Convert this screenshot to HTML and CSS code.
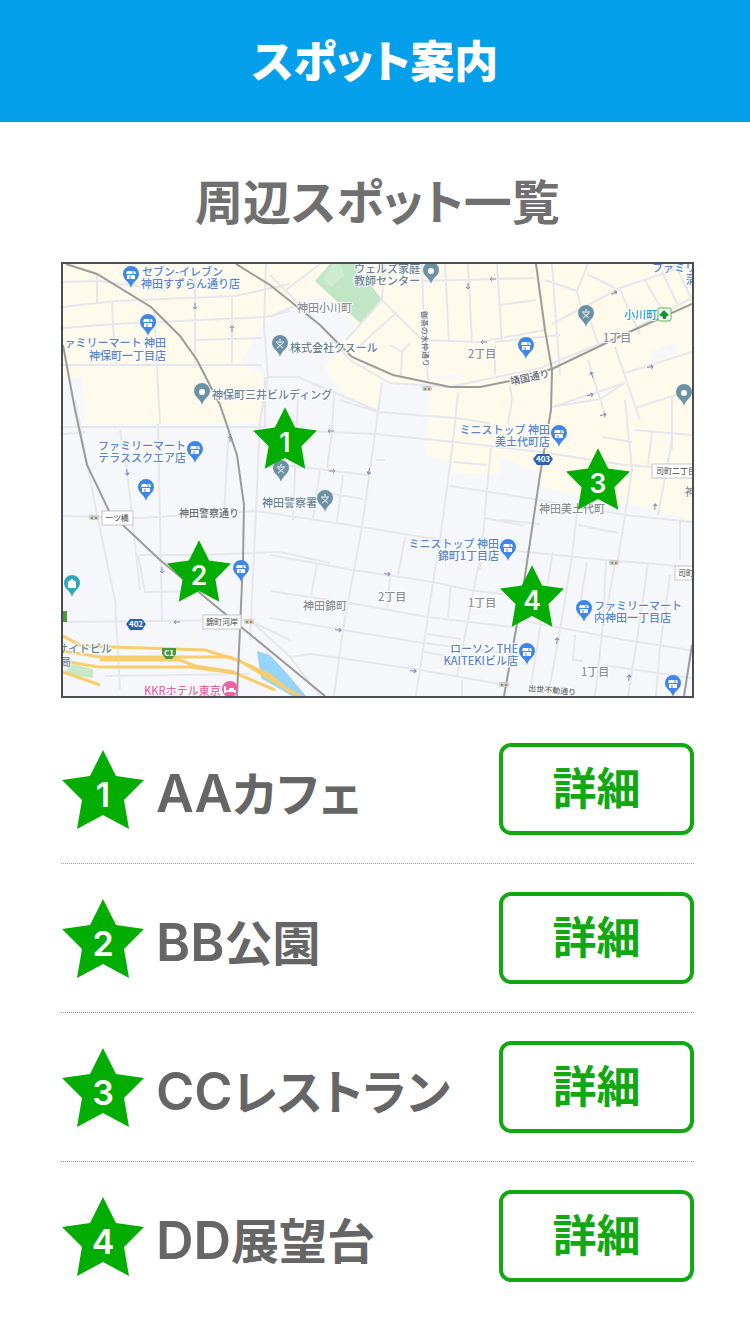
FILE: index.html
```html
<!DOCTYPE html>
<html lang="ja">
<head>
    <meta charset="UTF-8">
    <meta name="viewport" content="width=device-width, initial-scale=1.0">
    <title>スポット案内</title>
    <link rel="stylesheet" href="styles.css">
</head>
<body>
    <header class="header">
        <h1>スポット案内</h1>
    </header>
    <main class="container">
        <h2>周辺スポット一覧</h2>
        <svg class="map" viewBox="63 264 629 432" role="img" aria-label="周辺地図">
            <defs>
                <path id="star" d="M41 0 L54 26 L82 30 L62 50 L67 79 L41 65 L15 79 L20 50 L0 30 L28 26Z"/>
                <path id="pin" d="M0 13 C-1 7 -8 5 -8 -1 A8 8 0 0 1 8 -1 C8 5 1 7 0 13Z"/>
                <g id="shop">
                    <use href="#pin" fill="#3f86ea"/>
                    <path d="M-4 -4 H4 L5 -1 H-5Z M-4 0 H4 V4 H-4Z" fill="#fff"/>
                    <path d="M-1 1 V4 M2 -4 V0" stroke="#3f86ea"/>
                </g>
                <g id="place">
                    <use href="#pin" fill="#6d92a6"/>
                    <circle r="3" fill="#fff"/>
                </g>
                <g id="school">
                    <use href="#pin" fill="#6d92a6"/>
                    <path d="M0 -5 V-3 M-4 -2 H4 M-3 -1 L3 4 M3 -1 L-3 4" stroke="#fff" stroke-width="1" fill="none"/>
                </g>
                <path id="arrow" d="M-3 0 H3 M1 -2 L3 0 L1 2" fill="none" stroke="#8587b0" stroke-width="1"/>
                <g id="signal">
                    <rect x="-5" y="-3" width="10" height="5" rx="2" fill="#c9cbc4"/>
                    <circle cx="-2" r="1" fill="#34a853"/><circle cx="2" r="1" fill="#e5503f"/>
                </g>
            </defs>

            <!-- 区域 -->
            <rect x="63" y="264" width="629" height="432" fill="#f6f7fb"/>
            <g fill="#fffaec">
                <path d="M63 264 H692 V520 L640 506 L600 500 L542 487 V474 L500 457 V475 L452 473 V462 L426 456 L430 394 H382 L376 409 L345 395 L322 365 L338 350 L264 330 V365 H240 L262 372 V424 H86 L82 377 H63Z"/>
            </g>
            <g fill="#f6f7fb">
                <path d="M262 325 L240 365 L262 372 H322 L338 348 L356 325 L328 297 L300 300Z"/>
                <path d="M382 383 H428 V410 H378Z M651 351 L676 343 V353 L651 362Z M426 378 L458 374 V380 H426Z"/>
            </g>
            <path d="M330 264 H355 L382 300 L360 323 L315 281Z" fill="#c0e6c5"/>
            <path d="M333 264 H341 L344 276 L331 287 L322 279Z" fill="#ccebd0"/>
            <path d="M72 664 L93 669 V678 L64 674Z" fill="#c7e8c5"/>
            <path d="M257 651 L270 655 L284 670 L306 696 H292 L261 678Z" fill="#98d3fa"/>

            <!-- 道路 -->
            <g class="roads">
                <path d="M63 282 L100 281 L165 290 M63 307 L115 301 L235 296 L290 284 M63 328 L115 324 L265 317 L290 311 M97 273 V303 M63 365 H262 M112 301 L113 324 M113 324 L116 365 M154 309 L160 424 M195 270 V363 M232 296 V363 M266 264 L264 325 L268 377 H300 M195 340 L262 338"/>
                <path d="M63 427 H265 L265 377 M63 434 L85 432 M75 400 L98 520 L115 600 L120 690 M120 430 L127 470 L140 590 M158 424 L160 520 L162 620 M63 516 L140 518 L255 511 M229 425 L224 515 M268 377 L260 420 L256 511 L250 640 M140 555 L200 555 L280 552 L330 563 M138 555 L145 592 L200 591 M63 622 L250 620 M105 676 L250 674 M248 620 L290 640"/>
                <path d="M270 275 L320 325 L350 360 L390 383 L450 387 L540 368 L625 334 L692 298 M286 290 L320 264 M270 317 L300 303 M346 340 L382 300 L422 340 M382 300 L384 264 M355 350 L397 312 M422 264 L424 340 L428 380 M422 340 L480 342 L545 330 M410 343 L402 352 L401 375 M390 345 L402 352 M445 264 L449 342 M468 264 L472 342 M422 281 L495 279 L535 278 M497 264 L502 342 M500 305 L536 300"/>
                <path d="M552 264 L560 375 M545 280 L577 291 L588 264 M577 291 L580 305 M552 324 L620 288 L692 264 M587 274 L615 288 M620 290 L640 335 M645 280 L662 310 M662 272 L678 305 M675 264 L692 300 M590 320 L598 343 M615 347 L640 420 M588 360 L605 415 M625 373 L692 352 M552 407 L625 383 M552 407 L600 399 L625 383 M635 408 L692 390 M672 395 V450 M495 345 L495 375 M495 342 L560 335 M510 385 L512 400 L508 424"/>
                <path d="M268 430 L330 432 L375 434 L455 442 L540 452 L625 465 L692 470 M340 400 L378 412 L455 418 L490 423 M300 378 L376 410 M382 383 L375 434 L362 527 M298 395 L293 520 M334 395 L332 432 L327 468 M458 393 L453 442 L440 540 M376 460 H385 M283 465 L368 475 M320 470 L313 518 M343 475 L337 522 M321 492 L363 499 M256 511 L362 527 L440 540 M450 486 L540 500 L625 515 L692 522 M454 462 L487 465 M491 448 L486 500 L480 570"/>
                <path d="M270 555 L353 570 L433 582 L470 590 L545 600 M270 591 L350 603 L427 617 L520 628 M270 618 L343 630 L423 643 L520 655 M290 657 L310 654 L340 658 L420 670 L500 684 M362 527 L354 570 L343 630 L334 696 M405 537 L398 575 M390 577 L387 608 M317 565 L311 595 M440 540 L433 582 L424 643 L416 696 M451 586 L448 617 M427 634 L461 639 M424 652 L460 658 M480 558 L468 620 L457 676 M462 680 V696 M250 620 L290 657 L320 696"/>
                <path d="M517 551 L606 560 L680 566 M553 552 L543 610 L530 690 M572 556 L560 630 L548 696 M587 562 L578 618 M606 560 L603 625 L595 696 M615 563 L604 625 M648 563 L637 640 L628 696 M670 575 L660 648 L656 696 M520 620 L625 640 L690 650 M575 635 L573 660 L583 661 M603 665 L692 678 M500 520 L540 524 M485 518 L525 526 M578 525 L618 533 M577 512 L572 556 M625 400 L632 470 L618 560 M602 437 L632 442 M635 430 L692 435 M652 432 L648 465 M672 440 L658 515 M680 520 V560"/>
            </g>

            <!-- 高速道路 -->
            <path d="M63 636 L82 646 L205 650 L240 661 L280 685 L300 696 M63 651 L100 657 H230 L270 675 L290 692 M63 661 L98 667 H190 L235 673 L275 690 M100 660 H180 L195 666 L235 672 M63 672 L100 685" class="highway"/>

            <!-- 線路 -->
            <g class="rail">
                <path d="M66 264 L97 274 L151 307 L180 336 L197 360 L220 405 L237 455 L244 505 L243 560 L237 696"/>
                <path d="M63 345 L75 410 L87 465 L110 513 L160 560 L235 622 L325 696"/>
                <path d="M236 264 L270 285 L320 325 L352 357 L393 375 L450 387 L480 387 L510 381 L552 369 L625 334 L692 304"/>
                <path d="M536 264 L545 330 L552 370 L551 410 L540 475 L522 596 L504 696 M692 645 L684 696"/>
            </g>

            <use href="#arrow" transform="translate(195 306) rotate(90)"/>
            <use href="#arrow" transform="translate(232 329) rotate(-90)"/>
            <use href="#arrow" transform="translate(468 286) rotate(90)"/>
            <use href="#arrow" transform="translate(484 342) rotate(180)"/>
            <use href="#arrow" transform="translate(493 279) rotate(180)"/>
            <use href="#arrow" transform="translate(614 293) rotate(-25)"/>
            <use href="#arrow" transform="translate(650 367) rotate(-10)"/>
            <use href="#arrow" transform="translate(592 375) rotate(-110)"/>
            <use href="#arrow" transform="translate(590 395) rotate(-15)"/>
            <use href="#arrow" transform="translate(603 415) rotate(-10)"/>
            <use href="#arrow" transform="translate(127 472) rotate(80)"/>
            <use href="#arrow" transform="translate(230 439) rotate(-90)"/>
            <use href="#arrow" transform="translate(331 431) rotate(180)"/>
            <use href="#arrow" transform="translate(332 471)"/>
            <use href="#arrow" transform="translate(369 471) rotate(100)"/>
            <use href="#arrow" transform="translate(162 570) rotate(90)"/>
            <use href="#arrow" transform="translate(177 622) rotate(180)"/>
            <use href="#arrow" transform="translate(387 574) rotate(8)"/>
            <use href="#arrow" transform="translate(338 630) rotate(8)"/>
            <use href="#arrow" transform="translate(413 671) rotate(8)"/>
            <use href="#arrow" transform="translate(557 641) rotate(-85)"/>
            <use href="#arrow" transform="translate(629 678) rotate(-85)"/>
            <use href="#arrow" transform="translate(655 507) rotate(-85)"/>
            <use href="#signal" x="427" y="389"/>
            <use href="#signal" x="94" y="518"/>
            <use href="#signal" x="249" y="622"/>
            <use href="#signal" x="614" y="563"/>
            <use href="#signal" x="504" y="685"/>

            <!-- 施設名 -->
            <g class="label shop">
                <text x="142" y="276">セブン-イレブン</text>
                <text x="141" y="288">神田すずらん通り店</text>
                <text x="166" y="347" class="end">ファミリーマート 神田</text>
                <text x="166" y="360" class="end">神保町一丁目店</text>
                <text x="186" y="450" class="end">ファミリーマート</text>
                <text x="186" y="462" class="end">テラススクエア店</text>
                <text x="550" y="434" class="end">ミニストップ 神田</text>
                <text x="550" y="446" class="end">美土代町店</text>
                <text x="499" y="548" class="end">ミニストップ 神田</text>
                <text x="499" y="560" class="end">錦町1丁目店</text>
                <text x="518" y="653" class="end">ローソン THE</text>
                <text x="518" y="665" class="end">KAITEKIビル店</text>
                <text x="594" y="610">ファミリーマート</text>
                <text x="594" y="622">内神田一丁目店</text>
                <text x="652" y="272">ファミリ</text>
                <text x="686" y="284">蒲</text>
            </g>
            <g class="label place">
                <text x="420" y="273" class="end">ウェルズ家庭</text>
                <text x="420" y="285" class="end">教師センター</text>
                <text x="290" y="352">株式会社クスール</text>
                <text x="212" y="399">神保町三井ビルディング</text>
                <text x="262" y="507">神田警察署</text>
                <text x="112" y="653" class="end">サイドビル</text>
                <text x="60" y="666">局</text>
            </g>
            <g class="label area">
                <text x="297" y="312">神田小川町</text>
                <text x="539" y="513">神田美土代町</text>
                <text x="303" y="610">神田錦町</text>
                <text x="468" y="358">2丁目</text>
                <text x="603" y="342">1丁目</text>
                <text x="378" y="601">2丁目</text>
                <text x="468" y="607">1丁目</text>
                <text x="581" y="676">1丁目</text>
                <text x="685" y="496">神</text>
            </g>
            <g class="label street">
                <text x="179" y="517">神田警察通り</text>
                <text transform="translate(511 385) rotate(-12)">靖国通り</text>
                <text transform="translate(421 311) rotate(88)" class="tiny">御茶の水仲通り</text>
                <text transform="translate(528 691) rotate(5)" class="tiny">出世不動通り</text>
            </g>
            <text x="624" y="319" class="label station">小川町</text>
            <text x="144" y="695" class="label hotel">KKRホテル東京</text>

            <!-- 交差点・標識 -->
            <g class="crossing">
                <rect x="102" y="511" width="31" height="14"/><text x="117" y="521">一ツ橋</text>
                <rect x="203" y="615" width="38" height="14"/><text x="222" y="625">錦町河岸</text>
                <rect x="652" y="464" width="48" height="14"/><text x="676" y="474">司町二丁目</text>
                <rect x="675" y="566" width="40" height="14"/><text x="694" y="576">司町一丁</text>
            </g>
            <g class="sign">
                <path d="M533 459 L537 454 H549 L553 459 L549 465 H537Z M126 624 L130 619 H142 L146 624 L142 630 H130Z" fill="#2864b4"/>
                <path d="M162 648 H176 V654 L172 659 H166 L162 654Z M60 611 H67 V622 H60Z" fill="#4a9840"/>
                <text x="543" y="462">403</text>
                <text x="136" y="627">402</text>
                <text x="169" y="656">C1</text>
            </g>
            <rect x="658" y="308" width="13" height="13" rx="2" fill="#fff" stroke="#58b65c"/>
            <path d="M664 310 L669 315 L666 317 V319 H663 V317 L659 315Z" fill="#159528"/>

            <use href="#shop" x="131" y="275"/>
            <use href="#shop" x="148" y="323"/>
            <use href="#shop" x="526" y="346"/>
            <use href="#shop" x="195" y="450"/>
            <use href="#shop" x="146" y="488"/>
            <use href="#shop" x="559" y="434"/>
            <use href="#shop" x="241" y="569"/>
            <use href="#shop" x="508" y="548"/>
            <use href="#shop" x="584" y="609"/>
            <use href="#shop" x="527" y="652"/>
            <use href="#shop" x="673" y="684"/>
            <use href="#place" x="431" y="271"/>
            <use href="#place" x="202" y="392"/>
            <use href="#place" x="684" y="393"/>
            <use href="#school" x="586" y="314"/>
            <use href="#school" x="280" y="344"/>
            <use href="#school" x="281" y="469"/>
            <use href="#school" x="325" y="499"/>
            <use href="#pin" x="72" y="584" fill="#2fa9b8"/>
            <path d="M68 588 V582 L72 579 L76 582 V588Z" fill="#fff"/>
            <use href="#pin" x="230" y="690" fill="#ea62a4"/>
            <path d="M225 686 V693 M226 691 H235 V693 M229 689 H234" fill="none" stroke="#fff" stroke-width="2"/>

            <!-- スポット番号 -->
            <svg class="marker" x="253" y="407" width="64" height="62" viewBox="0 0 82 79">
                <use href="#star"/><text x="41" y="57">1</text>
            </svg>
            <svg class="marker" x="167" y="540" width="64" height="62" viewBox="0 0 82 79">
                <use href="#star"/><text x="41" y="57">2</text>
            </svg>
            <svg class="marker" x="566" y="448" width="64" height="62" viewBox="0 0 82 79">
                <use href="#star"/><text x="41" y="57">3</text>
            </svg>
            <svg class="marker" x="500" y="565" width="64" height="62" viewBox="0 0 82 79">
                <use href="#star"/><text x="41" y="57">4</text>
            </svg>
        </svg>

        <ul class="spot-list">
            <li class="spot">
                <svg class="marker" width="82" height="79" viewBox="0 0 82 79"><use href="#star"/><text x="41" y="57">1</text></svg>
                <p class="name"><span class="latin">AA</span>カフェ</p>
                <button type="button">詳細</button>
            </li>
            <li class="spot">
                <svg class="marker" width="82" height="79" viewBox="0 0 82 79"><use href="#star"/><text x="41" y="57">2</text></svg>
                <p class="name"><span class="latin">BB</span>公園</p>
                <button type="button">詳細</button>
            </li>
            <li class="spot">
                <svg class="marker" width="82" height="79" viewBox="0 0 82 79"><use href="#star"/><text x="41" y="57">3</text></svg>
                <p class="name"><span class="latin">CC</span>レストラン</p>
                <button type="button">詳細</button>
            </li>
            <li class="spot">
                <svg class="marker" width="82" height="79" viewBox="0 0 82 79"><use href="#star"/><text x="41" y="57">4</text></svg>
                <p class="name"><span class="latin">DD</span>展望台</p>
                <button type="button">詳細</button>
            </li>
        </ul>
    </main>
</body>
</html>
```
FILE: styles.css
```css
* {
    box-sizing: border-box;
}
body {
    font-family: "Noto Sans CJK JP", sans-serif;
    font-feature-settings: "palt";
    background-color: #fff;
    color: #666;
    margin: 0;
}
.header {
    background-color: #049fea;
    color: #fff;
    padding: 29px 0 33px;
}
h1, h2 {
    margin: 0;
    text-align: center;
    line-height: 60px;
}
h1 {
    font-size: 44px;
    font-weight: 900;
}
h2 {
    font-size: 48px;
    font-weight: 700;
    color: #707070;
    padding: 47px 0 33px;
}
.container {
    padding: 0 56px 0 61px;
}

/* map */
.map {
    display: block;
    width: 100%;
    height: auto;
    border: 2px solid #4a4d52;
}
.roads {
    fill: none;
    stroke: #e6e7ec;
    stroke-width: 2;
}
.highway {
    fill: none;
    stroke: #f8cd6b;
    stroke-width: 3;
}
.rail {
    fill: none;
    stroke: #9b9b99;
    stroke-width: 2;
}
.label {
    font-size: 11px;
    font-weight: 500;
    font-feature-settings: normal;
    paint-order: stroke;
    stroke: #fff;
    stroke-width: 2px;
}
.label .end {
    text-anchor: end;
}
.label .tiny {
    font-size: 8px;
}
.label.shop {
    fill: #5b85c6;
}
.label.place {
    fill: #688394;
}
.label.area {
    fill: #8b8e93;
}
.label.street {
    fill: #666a70;
    font-size: 10px;
}
.label.station {
    fill: #2a9dc4;
}
.label.hotel {
    fill: #e667a5;
}
.crossing rect {
    fill: #fff;
    stroke: #c4c6ca;
}
.crossing text {
    font-size: 8px;
    text-anchor: middle;
    fill: #444;
}
.sign text {
    font-size: 8px;
    font-weight: 700;
    text-anchor: middle;
    fill: #fff;
}
.marker {
    fill: #00ad00;
}
.marker text {
    font-family: Inter, sans-serif;
    font-size: 34px;
    font-weight: 600;
    text-anchor: middle;
    fill: #fff;
}

/* list */
.spot-list {
    list-style: none;
    margin: 17px 0 0;
    padding: 0;
}
.spot {
    display: flex;
    align-items: center;
    gap: 12px;
    padding: 28px 0 28px 1px;
    border-bottom: 1px dotted #999;
}
.spot:last-child {
    border-bottom: none;
}
.name {
    flex: 1;
    margin: 0;
    padding-top: 6px;
    font-size: 48px;
    font-weight: 700;
    line-height: 64px;
    white-space: nowrap;
}
.latin {
    font-family: Inter, sans-serif;
    font-size: 52px;
    font-weight: 600;
}
button {
    width: 195px;
    height: 92px;
    padding: 0 0 6px;
    background-color: #fff;
    border: 4px solid #12a812;
    border-radius: 12px;
    color: #12a812;
    font-family: inherit;
    font-size: 44px;
    font-weight: 700;
    line-height: 64px;
    cursor: pointer;
}
button:hover {
    background-color: #effaef;
}
```
